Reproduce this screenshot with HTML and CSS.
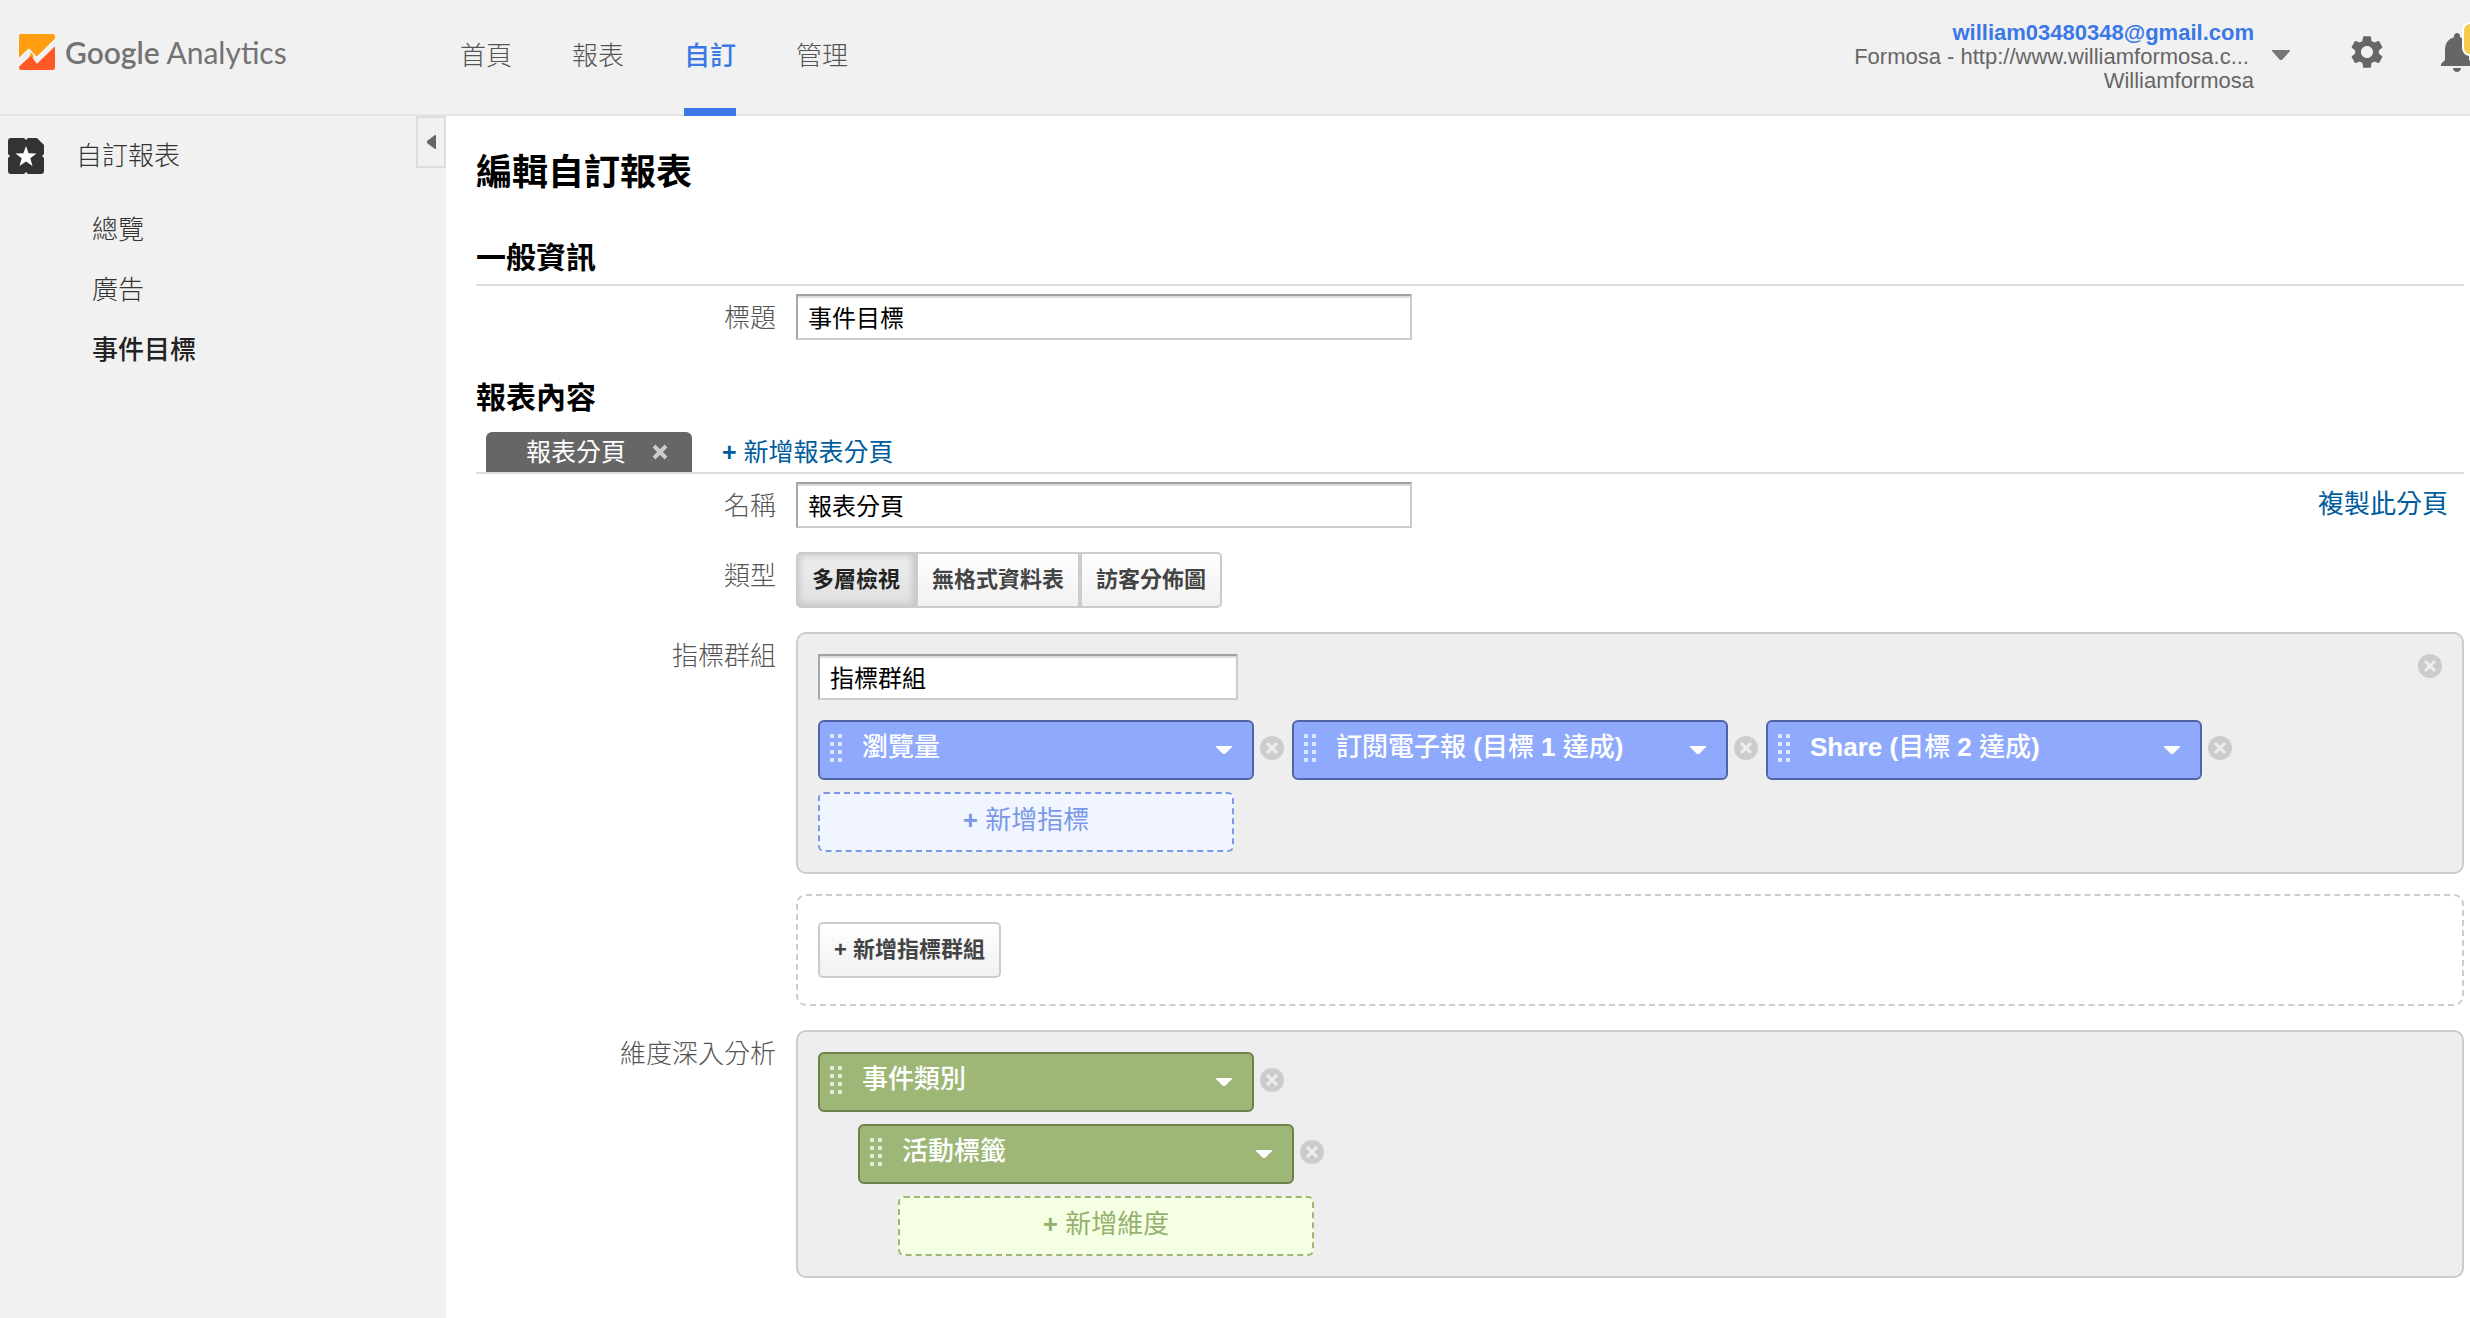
FILE: index.html
```html
<!DOCTYPE html>
<html lang="zh-Hant">
<head>
<meta charset="utf-8">
<title>Google Analytics</title>
<link rel="stylesheet" href="styles.css">
</head>
<body>
<svg class="symbols" aria-hidden="true">
  <symbol id="grip" viewBox="0 0 12 28">
    <path d="M0 0h4v4H0zM8 0h4v4H8zM0 8h4v4H0zM8 8h4v4H8zM0 16h4v4H0zM8 16h4v4H8zM0 24h4v4H0zM8 24h4v4H8z"/>
  </symbol>
  <symbol id="caret" viewBox="0 0 16 8"><path d="M0 0h16v1L9 8H7L0 1z"/></symbol>
  <symbol id="remove" viewBox="0 0 24 24">
    <circle cx="12" cy="12" r="12" fill="#ccc"/>
    <path d="M7 7l10 10M17 7L7 17" stroke="#eee" stroke-width="3"/>
  </symbol>
</svg>

<header class="topbar">
  <a class="brand" href="#">
    <svg class="brand-mark" viewBox="0 0 108 108" aria-hidden="true">
      <path fill="#ff9e0f" d="M0 7Q0 0 7 0H101Q108 0 108 7V14L53 68L42 56V76L30 66V43L0 71Z"/>
      <path fill="#f1f1f1" d="M0 71L30 43L53 68L108 14V37L54 89L35 65L0 96Z"/>
      <path fill="#ff9e0f" d="M35 55L43 63V78L33 67Z"/>
      <path fill="#ff5a26" d="M0 98L35 65L54 89L108 37V101Q108 108 101 108H7Q0 108 0 101Z"/>
    </svg>
    <span class="brand-text"><span class="brand-name">Google</span> Analytics</span>
  </a>
  <nav class="mainnav">
    <a href="#">首頁</a>
    <a href="#">報表</a>
    <a class="active" href="#" aria-current="page">自訂</a>
    <a href="#">管理</a>
  </nav>
  <div class="tools">
    <button class="account" type="button">
      <span class="account-lines">
        <span class="account-mail">william03480348@gmail.com</span>
        <span class="account-site">Formosa - http://www.williamformosa.c...</span>
        <span>Williamformosa</span>
      </span>
      <svg class="account-caret" viewBox="0 0 18 10" aria-hidden="true"><path d="M0 0h18v1l-8 9H8L0 1z"/></svg>
    </button>
    <button class="icon-button gear" type="button" aria-label="設定">
      <svg viewBox="0 0 24 24" aria-hidden="true"><path d="M19.43 12.98c.04-.32.07-.64.07-.98s-.03-.66-.07-.98l2.11-1.65c.19-.15.24-.42.12-.64l-2-3.46c-.12-.22-.39-.3-.61-.22l-2.49 1c-.52-.4-1.08-.73-1.69-.98l-.38-2.65C14.46 2.18 14.25 2 14 2h-4c-.25 0-.46.18-.49.42l-.38 2.65c-.61.25-1.17.59-1.69.98l-2.49-1c-.23-.09-.49 0-.61.22l-2 3.46c-.13.22-.07.49.12.64l2.11 1.65c-.04.32-.07.65-.07.98s.03.66.07.98l-2.11 1.65c-.19.15-.24.42-.12.64l2 3.46c.12.22.39.3.61.22l2.49-1c.52.4 1.08.73 1.69.98l.38 2.65c.03.24.24.42.49.42h4c.25 0 .46-.18.49-.42l.38-2.65c.61-.25 1.17-.59 1.69-.98l2.49 1c.23.09.49 0 .61-.22l2-3.46c.12-.22.07-.49-.12-.64l-2.11-1.65zM12 15.8c-2.1 0-3.8-1.7-3.8-3.8s1.7-3.8 3.8-3.8 3.8 1.7 3.8 3.8-1.7 3.8-3.8 3.8z"/></svg>
    </button>
    <button class="icon-button bell" type="button" aria-label="通知">
      <svg viewBox="0 0 24 24" aria-hidden="true"><path d="M12 22c1.1 0 2-.9 2-2h-4c0 1.1.89 2 2 2zm6-6v-5c0-3.07-1.64-5.64-4.5-6.32V4c0-.83-.67-1.5-1.5-1.5s-1.5.67-1.5 1.5v.68C7.63 5.36 6 7.92 6 11v5l-2 2v1h16v-1l-2-2z"/></svg>
      <span class="badge"></span>
    </button>
  </div>
</header>

<div class="layout">
  <aside class="sidebar">
    <div class="sidebar-inner">
      <a class="side-head" href="#">
        <svg class="side-icon" viewBox="0 0 36 36" aria-hidden="true">
          <path fill="#333" d="M3 0H16L18 2L20 0H29L36 7V16L34 18L36 20V33Q36 36 33 36H20L18 34L16 36H3Q0 36 0 33V20L2 18L0 16V3Q0 0 3 0Z"/>
          <path fill="#fff" d="M18 8L20.6 15.2L28.5 15.4L22.3 20.2L24.5 28L18 23.4L11.5 28L13.7 20.2L7.5 15.4L15.4 15.2Z"/>
        </svg>
        <span>自訂報表</span>
      </a>
      <ul class="side-list">
        <li><a href="#">總覽</a></li>
        <li><a href="#">廣告</a></li>
        <li><a class="current" href="#">事件目標</a></li>
      </ul>
    </div>
    <button class="collapse" type="button" aria-label="收合選單">
      <svg viewBox="0 0 9 14" aria-hidden="true"><path d="M9 0v14H8L0 8V6L8 0z"/></svg>
    </button>
  </aside>

  <main class="content">
    <h1>編輯自訂報表</h1>

    <section>
      <h2>一般資訊</h2>
      <div class="row first-row">
        <label class="row-label" for="title">標題</label>
        <input class="text-input" id="title" type="text" value="事件目標">
      </div>
    </section>

    <section class="report">
      <h2>報表內容</h2>
      <div class="tabs">
        <div class="tab">
          <span>報表分頁</span>
          <button class="tab-close" type="button" aria-label="關閉分頁">
            <svg viewBox="0 0 16 16" aria-hidden="true"><path d="M2 2l12 12M14 2L2 14"/></svg>
          </button>
        </div>
        <a class="add-tab" href="#"><b>+</b> 新增報表分頁</a>
      </div>

      <div class="row first-row">
        <label class="row-label" for="name">名稱</label>
        <input class="text-input" id="name" type="text" value="報表分頁">
        <a class="copy-link" href="#">複製此分頁</a>
      </div>

      <div class="row type-row">
        <span class="row-label" id="type-label">類型</span>
        <div class="segmented" role="group" aria-labelledby="type-label">
          <button class="btn pressed" type="button" aria-pressed="true">多層檢視</button>
          <button class="btn" type="button" aria-pressed="false">無格式資料表</button>
          <button class="btn" type="button" aria-pressed="false">訪客分佈圖</button>
        </div>
      </div>

      <div class="row">
        <label class="row-label" for="group">指標群組</label>
        <div class="panel">
          <div class="panel-head">
            <input class="text-input group-input" id="group" type="text" value="指標群組">
            <button class="remove" type="button" aria-label="移除群組"><svg><use href="#remove"/></svg></button>
          </div>
          <div class="chips">
            <div class="chip-wrap">
              <div class="chip metric">
                <select aria-label="指標 1"><option>瀏覽量</option></select>
                <svg class="grip" aria-hidden="true"><use href="#grip"/></svg>
                <svg class="caret" aria-hidden="true"><use href="#caret"/></svg>
              </div>
              <button class="remove" type="button" aria-label="移除"><svg><use href="#remove"/></svg></button>
            </div>
            <div class="chip-wrap">
              <div class="chip metric">
                <select aria-label="指標 2"><option>訂閱電子報 (目標 1 達成)</option></select>
                <svg class="grip" aria-hidden="true"><use href="#grip"/></svg>
                <svg class="caret" aria-hidden="true"><use href="#caret"/></svg>
              </div>
              <button class="remove" type="button" aria-label="移除"><svg><use href="#remove"/></svg></button>
            </div>
            <div class="chip-wrap">
              <div class="chip metric">
                <select aria-label="指標 3"><option>Share (目標 2 達成)</option></select>
                <svg class="grip" aria-hidden="true"><use href="#grip"/></svg>
                <svg class="caret" aria-hidden="true"><use href="#caret"/></svg>
              </div>
              <button class="remove" type="button" aria-label="移除"><svg><use href="#remove"/></svg></button>
            </div>
          </div>
          <button class="add metric-add" type="button"><b>+</b> 新增指標</button>
        </div>
      </div>

      <div class="row last-metric">
        <span class="row-label"></span>
        <div class="panel dashed">
          <button class="btn" type="button">+ 新增指標群組</button>
        </div>
      </div>

      <div class="row">
        <span class="row-label">維度深入分析</span>
        <div class="panel drill">
          <div class="chip-wrap">
            <div class="chip dimension">
              <select aria-label="維度 1"><option>事件類別</option></select>
              <svg class="grip" aria-hidden="true"><use href="#grip"/></svg>
              <svg class="caret" aria-hidden="true"><use href="#caret"/></svg>
            </div>
            <button class="remove" type="button" aria-label="移除"><svg><use href="#remove"/></svg></button>
          </div>
          <div class="chip-wrap level-2">
            <div class="chip dimension">
              <select aria-label="維度 2"><option>活動標籤</option></select>
              <svg class="grip" aria-hidden="true"><use href="#grip"/></svg>
              <svg class="caret" aria-hidden="true"><use href="#caret"/></svg>
            </div>
            <button class="remove" type="button" aria-label="移除"><svg><use href="#remove"/></svg></button>
          </div>
          <button class="add dimension-add level-3" type="button"><b>+</b> 新增維度</button>
        </div>
      </div>
    </section>
  </main>
</div>
</body>
</html>
```
FILE: styles.css
```css
* { box-sizing: border-box; }

body {
  margin: 0;
  min-height: 100vh;
  display: flex;
  flex-direction: column;
  background: #fff;
  color: #000;
  font: 26px/36px "Liberation Sans", "Noto Sans CJK TC", sans-serif;
}

a { color: inherit; text-decoration: none; }
button, input, select { font: inherit; color: inherit; }
button { margin: 0; padding: 0; border: 0; background: none; cursor: pointer; }
svg { display: block; }
.symbols { position: absolute; width: 0; height: 0; }

/* Top bar */
.topbar {
  display: flex;
  height: 116px;
  background: #f1f1f1;
  box-shadow: inset 0 -2px #e5e5e5;
  overflow: hidden;
}
.brand {
  display: flex;
  align-items: center;
  gap: 10px;
  width: 460px;
  padding: 0 0 12px 19px;
  color: #737373;
}
.brand-mark { width: 36px; height: 36px; }
.brand-text { font: 30px/36px Lato, sans-serif; }
.brand-name { font-weight: 600; }

.mainnav { display: flex; gap: 60px; color: #555; font-weight: 300; }
.mainnav a { padding-top: 38px; }
.mainnav .active {
  color: #3b78e7;
  font-weight: 500;
  border-bottom: 8px solid #3b78e7;
}

.tools { display: flex; margin-left: auto; margin-right: -11px; }
.account {
  display: flex;
  gap: 18px;
  padding: 21px 0 23px;
  color: #666;
  font-size: 22px;
  line-height: 24px;
  text-align: right;
}
.account-lines { display: flex; flex-direction: column; }
.account-mail { color: #3b78e7; font-weight: 700; }
.account-site { padding-right: 5px; }
.account-caret { width: 18px; height: 10px; margin-top: 29px; fill: #777; }
.icon-button { position: relative; fill: #666; }
.gear { padding-bottom: 12px; margin-left: 58px; }
.gear svg { width: 38px; height: 38px; }
.bell { padding-bottom: 12px; margin-left: 47px; }
.bell svg { width: 48px; height: 48px; }
.badge {
  position: absolute;
  top: 22px;
  left: 29px;
  width: 34px;
  height: 34px;
  border: 2px solid #fff;
  border-radius: 8px;
  background: #f7cb4d;
}

/* Layout */
.layout { display: flex; flex: 1; }
.sidebar {
  display: flex;
  justify-content: space-between;
  align-items: flex-start;
  flex: none;
  width: 446px;
  background: #f1f1f1;
  color: #333;
  font-weight: 300;
}
.sidebar-inner { padding: 22px 0 0 8px; }
.side-head { display: flex; gap: 32px; }
.side-icon { width: 36px; height: 36px; }
.side-list { margin: 26px 0 0; padding: 0 0 0 84px; list-style: none; }
.side-list li { padding: 12px 0; }
.side-list .current { color: #222; font-weight: 500; }
.collapse {
  display: flex;
  align-items: center;
  justify-content: center;
  width: 30px;
  height: 52px;
  border: 2px solid #ddd;
}
.collapse svg { width: 9px; height: 14px; fill: #666; }

.content { flex: 1; min-width: 0; padding: 32px 6px 20px 30px; }
h1 { margin: 0; font-size: 36px; line-height: 50px; font-weight: 700; }
h2 {
  margin: 39px 0 0;
  padding-bottom: 5px;
  border-bottom: 2px solid #ddd;
  font-size: 30px;
  line-height: 42px;
  font-weight: 700;
}

/* Form rows */
.row { display: flex; align-items: flex-start; gap: 20px; margin-bottom: 20px; }
.first-row { margin: 8px 0 0; }
.last-metric { margin-bottom: 24px; }
.row-label {
  flex: none;
  width: 300px;
  padding-top: 6px;
  color: #555;
  font-weight: 300;
  text-align: right;
}
.text-input {
  width: 616px;
  height: 46px;
  padding: 0 10px 2px;
  border: 2px solid #ccc;
  border-top-color: #a0a0a0;
  border-left-color: #a7a7a7;
  border-radius: 0;
  background: #fff;
  box-shadow: inset 0 2px #ddd;
  font-size: 24px;
}
.report h2 { margin-top: 37px; padding-bottom: 13px; border: 0; }
.tabs {
  display: flex;
  gap: 30px;
  padding-left: 10px;
  border-bottom: 2px solid #ddd;
  font-size: 25px;
  line-height: 40px;
}
.tab {
  display: flex;
  align-items: center;
  gap: 26px;
  padding: 0 24px 0 40px;
  border-radius: 6px 6px 0 0;
  background: #666;
  color: #fff;
}
.tab-close svg { width: 16px; height: 16px; stroke: #ccc; stroke-width: 4; }
.add-tab, .copy-link { color: #005c9c; }
.copy-link { margin-left: auto; padding: 4px 16px 0 0; }

.type-row { margin: 24px 0; }
.btn {
  height: 56px;
  padding: 0 14px;
  border: 2px solid #ccc;
  border-radius: 5px;
  background: linear-gradient(#fff, #f1f1f1);
  color: #444;
  font-size: 22px;
  font-weight: 700;
}
.segmented { display: flex; }
.segmented .btn { border-radius: 0; }
.segmented .btn:first-child { border-radius: 5px 0 0 5px; }
.segmented .btn:last-child { border-radius: 0 5px 5px 0; }
.segmented .pressed {
  background: linear-gradient(#eee, #e0e0e0);
  box-shadow: inset 0 0 8px #bbb;
  color: #222;
}

/* Panels and chips */
.panel {
  flex: 1;
  min-width: 0;
  padding: 20px;
  border: 2px solid #ccc;
  border-radius: 10px;
  background: #eee;
}
.panel.dashed { padding: 26px 20px; border-style: dashed; background: none; }
.panel.dashed .btn { display: block; }
.panel-head { display: flex; justify-content: space-between; align-items: flex-start; }
.group-input { width: 420px; }
.chips { display: flex; flex-wrap: wrap; gap: 12px 8px; margin: 20px 0 12px; }
.chip-wrap { display: flex; gap: 6px; }
.chip {
  display: grid;
  width: 436px;
  height: 60px;
  border: 2px solid;
  border-radius: 6px;
  color: #fff;
}
.chip > * { grid-area: 1 / 1; }
.chip select {
  width: 100%;
  padding: 0 50px 6px 42px;
  border: 0;
  background: none;
  appearance: none;
  font-family: "Liberation Sans", "Noto Sans CJK TC Medium", "Noto Sans CJK TC", sans-serif;
  font-weight: 700;
  font-synthesis: none;
}
.grip { width: 12px; height: 28px; margin: 12px 0 0 10px; fill: #fff; opacity: .7; pointer-events: none; }
.caret { justify-self: end; width: 16px; height: 8px; margin: 24px 20px 0 0; fill: #fff; pointer-events: none; }
.metric { border-color: #5264a5; background: #8faafc; }
.dimension { border-color: #6d814b; background: #9eb777; }
.remove { width: 24px; height: 24px; }
.remove svg { width: 24px; height: 24px; }
.chip-wrap .remove { margin-top: 16px; }
.add {
  display: block;
  width: 416px;
  height: 60px;
  padding-bottom: 4px;
  border: 2px dashed;
  border-radius: 6px;
}
.metric-add { border-color: #7b99e8; background: #f0f5ff; color: #7b99e8; }
.dimension-add { border-color: #9eb777; background: #f4ffe3; color: #96b06e; }
.drill { display: flex; flex-direction: column; gap: 12px; }
.level-2 { margin-left: 40px; }
.level-3 { margin-left: 80px; }
```
